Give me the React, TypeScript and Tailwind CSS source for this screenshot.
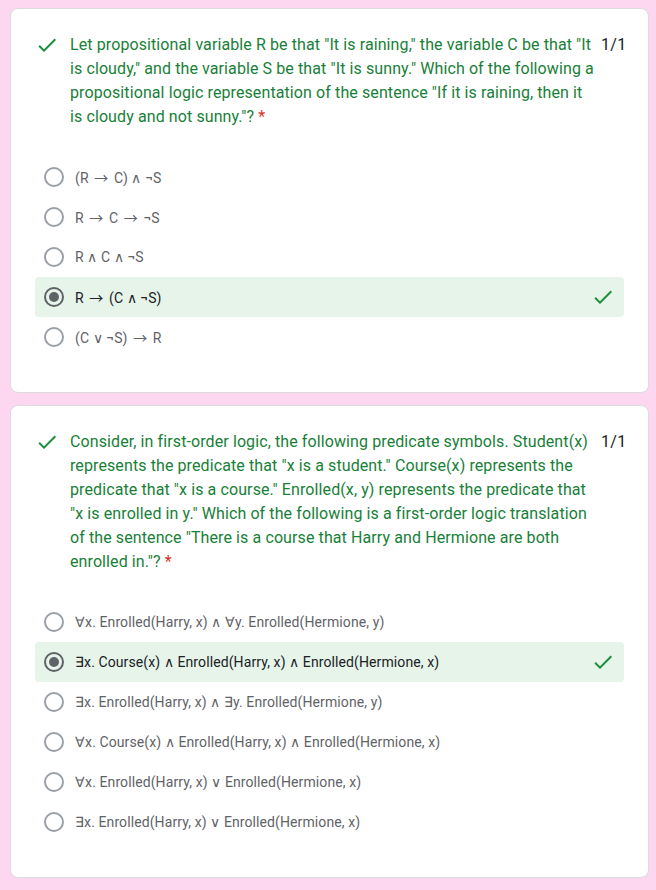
import React from 'react';

interface Question {
  text: string;
  options: string[];
  selected: number;
}

const QUESTIONS: Question[] = [
  {
    text: 'Let propositional variable R be that "It is raining," the variable C be that "It is cloudy," and the variable S be that "It is sunny." Which of the following a propositional logic representation of the sentence "If it is raining, then it is cloudy and not sunny."?',
    options: ['(R → C) ∧ ¬S', 'R → C → ¬S', 'R ∧ C ∧ ¬S', 'R → (C ∧ ¬S)', '(C ∨ ¬S) → R'],
    selected: 3,
  },
  {
    text: 'Consider, in first-order logic, the following predicate symbols. Student(x) represents the predicate that "x is a student." Course(x) represents the predicate that "x is a course." Enrolled(x, y) represents the predicate that "x is enrolled in y." Which of the following is a first-order logic translation of the sentence "There is a course that Harry and Hermione are both enrolled in."?',
    options: [
      '∀x. Enrolled(Harry, x) ∧ ∀y. Enrolled(Hermione, y)',
      '∃x. Course(x) ∧ Enrolled(Harry, x) ∧ Enrolled(Hermione, x)',
      '∃x. Enrolled(Harry, x) ∧ ∃y. Enrolled(Hermione, y)',
      '∀x. Course(x) ∧ Enrolled(Harry, x) ∧ Enrolled(Hermione, x)',
      '∀x. Enrolled(Harry, x) ∨ Enrolled(Hermione, x)',
      '∃x. Enrolled(Harry, x) ∨ Enrolled(Hermione, x)',
    ],
    selected: 1,
  },
];

const Check = ({ className }: { className?: string }) => (
  <svg viewBox="0 0 24 24" className={className} fill="currentColor">
    <path d="M9 16.17L4.83 12l-1.42 1.41L9 19 21 7l-1.41-1.41z" />
  </svg>
);

const Radio = ({ on }: { on: boolean }) => (
  <div
    className={`w-[20px] h-[20px] rounded-full border-2 flex items-center justify-center shrink-0 ${
      on ? 'border-[#5f6368]' : 'border-[#9aa0a6]'
    }`}
  >
    {on && <div className="w-[10px] h-[10px] rounded-full bg-[#5f6368]" />}
  </div>
);

// the screenshot's arrow is the long thin full-width one, Roboto's is tiny
const Formula = ({ text }: { text: string }) => {
  const parts = text.split('→');
  return (
    <>
      {parts.map((p, i) => (
        <React.Fragment key={i}>
          {i > 0 && <span className="px-[2px] font-['Noto_Sans_CJK_SC',sans-serif]">→</span>}
          {p}
        </React.Fragment>
      ))}
    </>
  );
};

const QuestionCard = ({ q }: { q: Question }) => (
  <div className="ml-[10px] w-[639px] bg-white border border-[#dadce0] rounded-[8px] pt-[24px] pb-[35px] pl-[24px] pr-[20px]">
    <div className="flex items-start">
      <Check className="w-[24px] h-[24px] text-[#1e8e3e] mr-[11px] shrink-0" />
      <div className="w-[526px] text-[16px] leading-[24px] tracking-[0.1px] text-[#188038]">
        {q.text} <span className="text-[#d93025]">*</span>
      </div>
      <div className="ml-[5px] text-[16px] leading-[24px] tracking-[0.3px] text-[#202124] whitespace-nowrap">1/1</div>
    </div>
    <div className="mt-[28px] pr-[4px]">
      {q.options.map((opt, i) => {
        const on = i === q.selected;
        return (
          <div
            key={i}
            className={`h-[40px] flex items-center rounded-[4px] pl-[9px] pr-[9px] ${on ? 'bg-[#e6f4ea]' : ''}`}
          >
            <Radio on={on} />
            <span
              className={`ml-[11px] flex-1 text-[14px] leading-[20px] tracking-[0.1px] ${
                on ? 'text-[#202124]' : 'text-[#5f6368]'
              }`}
            >
              <Formula text={opt} />
            </span>
            {on && <Check className="w-[24px] h-[24px] text-[#1e8e3e]" />}
          </div>
        );
      })}
    </div>
  </div>
);

export default function App() {
  return (
    <div
      className="min-h-[890px] bg-[#fdd7ef] pt-[8px] pb-[12px] flex flex-col gap-[12px]"
      style={{ fontFamily: 'Roboto, "Liberation Sans", sans-serif' }}
    >
      {QUESTIONS.map((q, i) => (
        <QuestionCard key={i} q={q} />
      ))}
    </div>
  );
}
